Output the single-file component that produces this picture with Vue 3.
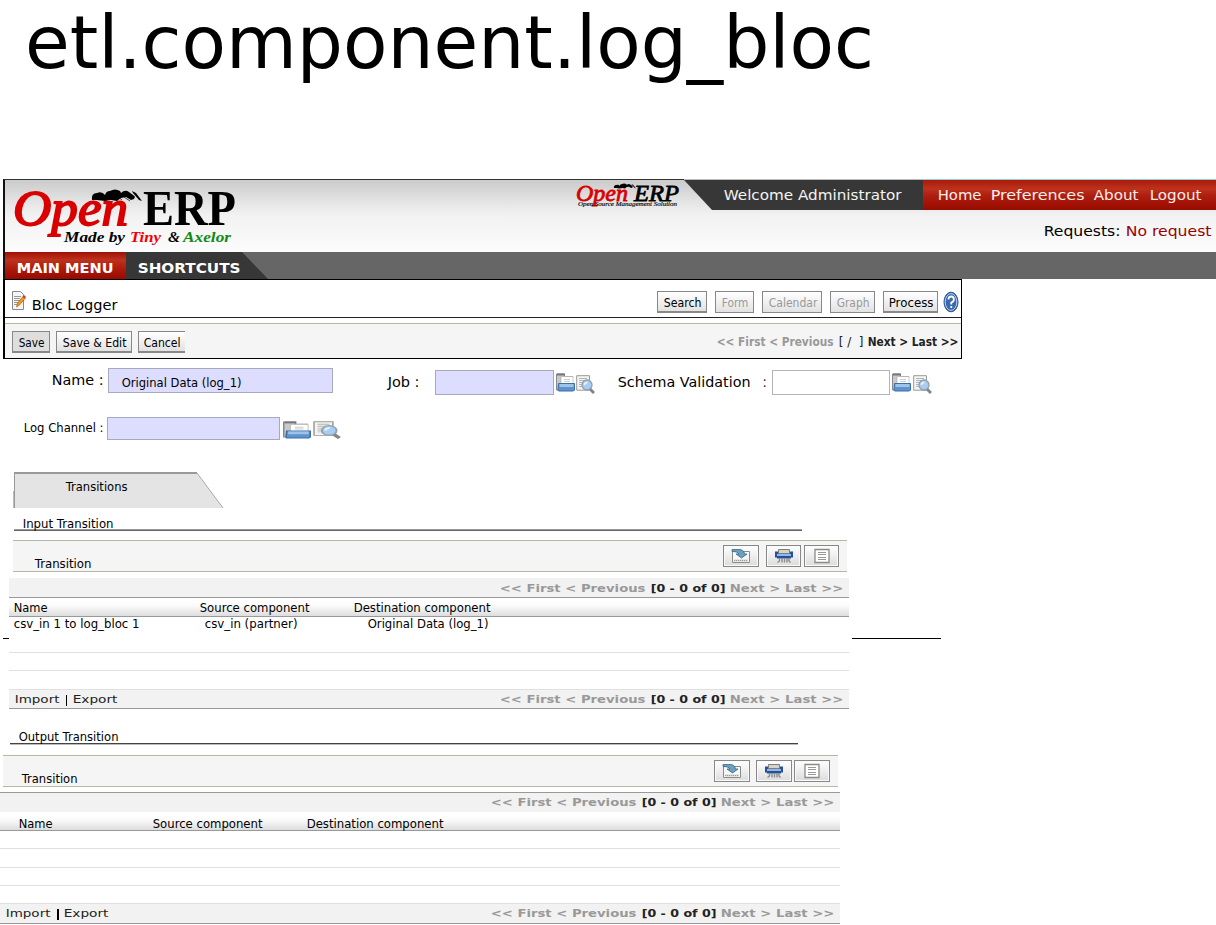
<script setup>
import { h } from 'vue'

// A line of text set to an exact measure
const Fit = (p) =>
  h('svg', { class: 'fit', width: p.w, height: 16 }, [
    h('text', { x: 0.7, y: 12, textLength: p.w - 1.2, lengthAdjust: 'spacingAndGlyphs', 'font-size': p.s || 12 }, p.t),
  ])
Fit.props = ['t', 'w', 's']

const Pager = () =>
  h('div', { class: 'pager' }, [
    h(Fit, { t: '<< First < Previous', w: 147, s: 10.6 }),
    h('b', { class: 'count' }, [h(Fit, { t: '[0 - 0 of 0]', w: 76, s: 10.6 })]),
    h(Fit, { t: 'Next > Last >>', w: 115, s: 10.6 }),
  ])

const Folder = (p) =>
  h('svg', { width: p.w, height: 19, viewBox: '0 0 19 19', preserveAspectRatio: 'none' }, [
    h('path', { d: 'M.5 17V1h8v2.500h8v13z', fill: '#c9c9c9', stroke: '#888' }),
    h('path', { d: 'M1 .500h8v2H1z', fill: '#777' }),
    h('path', { d: 'M5 3.500h12v8H5z', fill: '#fff', stroke: '#aaa', 'stroke-width': 0.6 }),
    h('path', { d: 'M8 6.5h6M8 8.500h6', stroke: '#ccc' }),
    h('path', { d: 'M2.500 10.500h16v6.500l-1 1h-15l-.5-1z', fill: '#5d94d0', stroke: '#3c6ea9' }),
    h('path', { d: 'M3.500 11h14v3h-14z', fill: '#a0c2e6' }),
  ])
Folder.props = ['w']

const Lens = (p) =>
  h('svg', { width: p.w, height: 19, viewBox: '0 0 19 19', preserveAspectRatio: 'none' }, [
    h('path', { d: 'M.7.7h12.8v14.500H.7z', fill: '#f4f4f2', stroke: '#999994' }),
    h('path', { d: 'M3 3.5h8M3 5.5h6M3 7.5h4M3 9.5h3M3 11.5h3', stroke: '#b4b4b4' }),
    h('path', { d: 'M14 14l4 4', stroke: '#858585', 'stroke-width': 3 }),
    h('circle', { cx: 11, cy: 10, r: 5, fill: '#a9cdf1', stroke: '#8f9faf', 'stroke-width': 1.3 }),
    h('path', { d: 'M8.500 10q0-2.500 3-2.500', fill: 'none', stroke: '#e6f3ff', 'stroke-width': 1.6 }),
  ])
Lens.props = ['w']

const Tools = () =>
  h('div', { class: 'tools' }, [
    h('span', { class: 'tool' }, [
      h('svg', { width: 20, height: 16 }, [
        h('path', { d: 'M1.500 3.500h17v11h-17z', fill: '#f8f8f6', stroke: '#8b8b88' }),
        h('path', { d: 'M3 11.500h14v2H3z', fill: '#d4d4d2' }),
        h('path', { d: 'M3 12.500h14', stroke: '#999', 'stroke-dasharray': '1 1' }),
        h('path', { d: 'M1 1.500h7q5 0 5.500 4.500h2.500l-5.500 4L5 6h3Q7 3.500 1 3.500z', fill: '#6f9fbd', stroke: '#346a8c', 'stroke-width': 0.8 }),
      ]),
    ]),
    h('span', { class: 'tool' }, [
      h('svg', { width: 20, height: 16 }, [
        h('path', { d: 'M1 3.500h18v6h-2v1H3v-1H1z', fill: '#25509b' }),
        h('path', { d: 'M3 6h14v2H3z', fill: '#91b9e5' }),
        h('path', { d: 'M4.500 1.500h11v4h-11z', fill: '#d4d4cc', stroke: '#80807a' }),
        h('path', { d: 'M5.500 10.500v2.500l-2 1.500M8 10.500v4M10.500 10.500v4M13 10.500v4M15 10.500v2.500l1.500 1.500', fill: 'none', stroke: '#8a8a88', 'stroke-width': 1.4 }),
      ]),
    ]),
    h('span', { class: 'tool' }, [
      h('svg', { width: 18, height: 16 }, [
        h('path', { d: 'M2 1.500h14v13H2z', fill: '#fff', stroke: '#8b8b84', 'stroke-width': 1.3 }),
        h('path', { d: 'M5 4.500h8M5 6.500h8M5 9.500h8M5 11.500h8', stroke: '#999' }),
      ]),
    ]),
  ])

const ant = 'M92 200q-1-7 5-7 5-2 8 2 1-4 5-4 5-3 10 0l1 2q4-4 8-1l4 3q3 1 1 4l-3 1-5-3-5 1-4 3-6-1-6 1-8-1zM132 191l4 2 6 8-3-1-6-7z'
</script>

<template>
  <div class="page">
    <div class="title"><svg class="fit" width="860" height="90"><text x="25" y="68" textLength="849" lengthAdjust="spacingAndGlyphs" font-size="73.300">etl.component.log_bloc</text></svg></div>

    <header class="head">
      <svg class="logo" width="565" height="72" viewBox="8 180 565 72">
        <g class="serif">
          <text x="13" y="225" font-size="50" font-style="italic" textLength="115" lengthAdjust="spacingAndGlyphs" fill="#d80000" stroke="#d80000" stroke-width="1.800">Open</text>
          <text x="143" y="225" font-size="51" font-weight="bold" textLength="93" lengthAdjust="spacingAndGlyphs">ERP</text>
          <g font-size="15.500" font-style="italic" font-weight="bold">
            <text x="64" y="242" textLength="61" lengthAdjust="spacingAndGlyphs">Made by</text>
            <text x="130" y="242" textLength="31" lengthAdjust="spacingAndGlyphs" fill="#f00000">Tiny</text>
            <text x="168" y="242" textLength="12" lengthAdjust="spacingAndGlyphs">&amp;</text>
            <text x="183" y="242" textLength="48" lengthAdjust="spacingAndGlyphs" fill="#108a10">Axelor</text>
          </g>
        </g>
        <path :d="ant" />
        <path d="M113 199l4-3 5 4M124 197l6 4" fill="none" stroke="#000" stroke-width=".7" />
      </svg>
      <svg class="small-logo" width="111" height="30" viewBox="573 180 111 30">
        <g class="serif" font-style="italic">
          <text x="576" y="201" font-size="24" textLength="52" lengthAdjust="spacingAndGlyphs" fill="#d80000" stroke="#d80000" stroke-width=".8">Open</text>
          <text x="634" y="201" font-size="24" textLength="45" lengthAdjust="spacingAndGlyphs" stroke="#000" stroke-width=".8">ERP</text>
          <text x="578" y="206" font-size="6.500" textLength="99" lengthAdjust="spacingAndGlyphs" stroke="#000" stroke-width=".15">Open Source Management Solution</text>
        </g>
        <path :d="ant" transform="translate(573.500 100) scale(.44)" />
      </svg>
      <div class="account">
        <div class="strip">
          <div class="welcome"><Fit t="Welcome Administrator" w="179" s="14.500" /></div>
          <nav class="links">
            <Fit t="Home" w="45" s="14.500" /><Fit t="Preferences" w="95" s="14.500" /><Fit t="About" w="46" s="14.500" /><Fit t="Logout" w="53" s="14.500" />
          </nav>
        </div>
        <div class="requests"><Fit t="Requests:" w="78" s="14.300" /><Fit class="none" t="No request" w="87" s="14.300" /></div>
      </div>
    </header>

    <div class="menu">
      <div class="main-menu"><Fit t="MAIN MENU" w="98" s="14.300" /></div>
      <div class="shortcuts"><Fit t="SHORTCUTS" w="104" s="14.300" /></div>
    </div>

    <section class="box">
      <div class="heading">
        <svg class="doc" width="14" height="20">
          <path d="M.5.5h8l3 3v15H.5z" fill="#f5f5f3" stroke="#888" />
          <path d="M2 5.500h7M2 7.500h6M2 9.500h6M2 11.500h5M2 13.500h5" stroke="#999" />
          <path d="M4.500 16l1-4 6-7 2 2-6 7z" fill="#f39a18" stroke="#a5520c" stroke-width=".6" />
          <path d="M10.500 6l1.500-2 2 2-1.500 1.500z" fill="#d33" />
        </svg>
        <Fit class="name" t="Bloc Logger" w="87" s="14" />
        <div class="views">
          <span class="btn search"><Fit t="Search" w="39" s="12.500" /></span>
          <span class="btn form off"><Fit t="Form" w="28" s="12.500" /></span>
          <span class="btn calendar off"><Fit t="Calendar" w="50" s="12.500" /></span>
          <span class="btn graph off"><Fit t="Graph" w="34" s="12.500" /></span>
          <span class="btn process"><Fit t="Process" w="46" s="12.500" /></span>
          <svg width="17" height="22"><ellipse cx="8" cy="11" rx="7" ry="9.800" fill="#3a68ad" stroke="#24549b" /><ellipse cx="8" cy="11" rx="5.800" ry="8.400" fill="none" stroke="#dce8f7" stroke-width=".8" /><path d="M5.500 8.500q0-3 2.700-3t2.700 3q0 2-2.600 3v2M8.300 15v2" fill="none" stroke="#fff" stroke-width="1.800" /></svg>
        </div>
      </div>
      <div class="actions">
        <span class="btn save"><Fit t="Save" w="27" s="12.500" /></span>
        <span class="btn edit"><Fit t="Save &amp; Edit" w="65" s="12.500" /></span>
        <span class="btn cancel"><Fit t="Cancel" w="38" s="12.500" /></span>
        <div class="record">
          <Fit class="past" t="&lt;&lt; First &lt; Previous" w="118" s="12" /><Fit class="slash" t="[ /  ]" w="26" s="12" /><Fit t="Next &gt; Last &gt;&gt;" w="92" s="12" />
        </div>
      </div>
    </section>

    <section class="fields">
      <div class="row first">
        <Fit class="up" t="Name :" w="53" s="14.300" />
        <div class="input tall"><Fit t="Original Data (log_1)" w="121" s="12" /></div>
        <Fit t="Job :" w="33" s="14.300" />
        <div class="input low"></div><Folder w="19" class="ico" /><Lens w="19" class="ico2" />
        <Fit t="Schema Validation" w="134" s="14.300" /><Fit t=":" w="5" s="14.300" />
        <div class="input low plain"></div><Folder w="19" class="ico" /><Lens w="19" class="ico2" />
      </div>
      <div class="row second">
        <Fit t="Log Channel :" w="81" s="12" />
        <div class="input"></div><Folder w="28" class="wide" /><Lens w="28" class="wide" />
      </div>
    </section>

    <div class="tab">
      <svg width="211" height="36"><path d="M1 1h183l26 35H1z" fill="#e4e4e4" /><path d="M1.500 36V1" stroke="#999" /><path d="M1 1h183" stroke="#999" stroke-width="2" /><path d="M184 1l26 35" stroke="#aaa" /><path d="M.5 19v17" stroke="#bbb" /></svg>
      <Fit class="label" t="Transitions" w="63" s="12" />
    </div>

    <section class="block in">
      <div class="legend"><Fit t="Input Transition" w="92" /></div>
      <div class="panel"><Fit class="label" t="Transition" w="58" /><Tools /></div>
      <div class="list">
        <div class="bar top"><Pager /></div>
        <div class="cols"><Fit t="Name" w="35" /><Fit t="Source component" w="111" /><Fit t="Destination component" w="138" /></div>
        <div class="line data"><Fit t="csv_in 1 to log_bloc 1" w="127" /><Fit t="csv_in (partner)" w="94" /><Fit t="Original Data (log_1)" w="122" /></div>
        <div class="line"></div>
        <div class="line last"></div>
        <div class="bar foot"><Fit t="Import" w="46" s="10.500" /><i class="sep"></i><Fit t="Export" w="46" s="10.500" /><Pager /></div>
      </div>
      <div class="rule left"></div>
      <div class="rule right"></div>
    </section>

    <section class="block out">
      <div class="legend"><Fit t="Output Transition" w="101" /></div>
      <div class="panel"><Fit class="label" t="Transition" w="57" /><Tools /></div>
      <div class="list">
        <div class="bar top"><Pager /></div>
        <div class="cols"><Fit t="Name" w="35" /><Fit t="Source component" w="111" /><Fit t="Destination component" w="138" /></div>
        <div class="line"></div>
        <div class="line taller"></div>
        <div class="line"></div>
        <div class="line"></div>
        <div class="bar foot"><Fit t="Import" w="46" s="10.500" /><i class="sep"></i><Fit t="Export" w="46" s="10.500" /><Pager /></div>
      </div>
    </section>
  </div>
</template>

<style>
body { background: #fff; }
.fit { display: block; flex: none; overflow: visible; }
.fit text { fill: currentColor; font-family: "DejaVu Sans", sans-serif; white-space: pre; }
.pager { display: grid; grid-template-columns: 151px 79px 115px; color: #999; font-weight: bold; }
.pager .count { color: #222; }
.tool { box-sizing: border-box; height: 22px; display: flex; align-items: center; justify-content: center; border: 1px solid #888; box-shadow: inset 0 0 0 1px #fafafa; background: linear-gradient(#fff, #dcdcdc); }
</style>

<style scoped>
.page { width: 1216px; height: 925px; overflow: hidden; color: #000; font-family: "DejaVu Sans", sans-serif; }
.page * { box-sizing: border-box; }
.title { height: 179px; }
.serif { font-family: "Liberation Serif", serif; }

.head { display: flex; height: 73px; margin-left: 3px; border-left: 2px solid #111; border-top: 1px solid #333; background: linear-gradient(#cbcbcb, #e4e4e4 30%, #f2f2f2 50%, #fcfcfc); }
.logo { margin-left: 3px; flex: none; }
.small-logo { flex: none; }
.account { width: 532px; margin-top: -1px; border-top: 1px solid #bbb; }
.strip { display: flex; height: 30px; }
.welcome { width: 239px; padding: 8px 0 0 39px; background: #373737; color: #f4f4f4; clip-path: polygon(0 0, 100% 0, 100% 100%, 28px 100%); }
.links { width: 293px; padding: 8px 0 0 14px; display: grid; grid-template-columns: 53px 103px 56px auto; color: #fbeeee; background: linear-gradient(#a81a0b, #bd321d 30%, #b02010 50%, #980900); box-shadow: 0 -1px 0 #8fd0d2; }
.requests { display: grid; grid-template-columns: 82px auto; padding: 14px 0 0 359px; }
.none { color: #900; }

.menu { display: flex; height: 27px; margin-left: 3px; border-left: 2px solid #111; background: #666; color: #fff; font-weight: bold; }
.main-menu { width: 121px; padding: 9px 0 0 11px; background: linear-gradient(#a01005, #bd321d 30%, #ae1c0d 60%, #980900); }
.shortcuts { width: 142px; padding: 9px 0 0 11px; background: #373737; clip-path: polygon(0 0, 116px 0, 100% 100%, 0 100%); }

.box { width: 959px; height: 80px; margin-left: 3px; border: 1px solid #000; border-left-width: 2px; }
.heading { display: flex; height: 38px; padding-left: 7px; border-bottom: 1px solid #222; }
.doc { margin-top: 11px; flex: none; }
.name { margin: 18px 0 0 5px; }
.views { display: grid; grid-template-columns: 58px 47px 68px 53px 60px 17px; margin: 11px 0 0 539px; }
.btn { display: block; height: 22px; padding: 3px 0 0 5px; border: 1px solid #888; border-bottom-width: 2px; background: linear-gradient(#fff, #e2e2e2); }
.search { width: 50px; }
.form { width: 39px; }
.calendar { width: 60px; }
.graph { width: 45px; }
.process { width: 55px; padding-left: 4px; }
.off { color: #999; border-bottom-width: 1px; }
.actions { display: grid; grid-template-columns: 44px 82px 578px auto; margin-top: 5px; height: 35px; padding: 7px 0 0 7px; background: #f5f5f5; border-top: 1px solid #b7b7a8; }
.save { width: 38px; background: #dedede; }
.edit { width: 76px; }
.cancel { width: 47px; padding-left: 4px; border-right: 0; }
.record { display: grid; grid-template-columns: 122px 29px auto; padding-top: 3px; font-weight: bold; color: #222; }
.past { color: #999; }
.slash { font-weight: normal; }

.fields { height: 113px; }
.row { display: grid; align-items: start; }
.first { grid-template-columns: 57px 279px 48px 121px 20px 41px 145px 10px 120px 21px auto; padding: 9px 0 0 51px; height: 58px; }
.first > .fit { margin-top: 7px; }
.first > .fit.up { margin-top: 5px; }
.input { height: 25px; border: 1px solid #a9a9bd; background: #ddf; }
.tall { width: 225px; padding: 6px 0 0 12px; }
.low { width: 119px; margin-top: 2px; }
.plain { width: 118px; background: #fff; border-color: #b4b4b4; }
.ico { margin-top: 5px; }
.ico2 { margin-top: 7px; }
.second { grid-template-columns: 84px 176px 30px auto; padding-left: 23px; }
.second > .fit { margin-top: 3px; }
.second .input { width: 173px; height: 23px; }
.wide { margin-top: 4px; height: 18px; }

.tab { display: grid; height: 36px; margin-left: 13px; }
.tab > * { grid-area: 1 / 1; }
.tab .label { margin: 7px 0 0 52px; }

.block { display: grid; align-content: start; }
.in { grid-template-columns: 9px 843px 1fr; margin-top: 8px; height: 210px; }
.in > .legend, .in > .panel, .in > .list { grid-column: 2; }
.legend { height: 14px; border-bottom: 1px solid #999; box-shadow: 0 1px 0 #666; }
.in .legend { width: 788px; margin-left: 5px; padding-left: 8px; }
.panel { display: flex; justify-content: space-between; height: 32px; margin-top: 10px; background: #f5f5f5; border-top: 1px solid #b7b7a8; border-bottom: 1px solid #b7b7a8; }
.in .panel { width: 834px; margin-left: 4px; padding: 4px 8px 0 21px; }
.panel .label { margin-top: 11px; }
.panel :deep(.tools) { display: grid; width: 116px; }
.in :deep(.tools) { grid-template-columns: 36px 35px 35px; column-gap: 0; }
.in :deep(.tool:nth-child(n + 2)) { margin-left: 0; }
.in .panel :deep(.tools) { grid-template-columns: 36px 7px 35px 3px 35px; }
.out .panel :deep(.tools) { grid-template-columns: 36px 6px 36px 2px 36px; }
.panel :deep(.tool:nth-child(1)) { grid-column: 1; }
.panel :deep(.tool:nth-child(2)) { grid-column: 3; }
.panel :deep(.tool:nth-child(3)) { grid-column: 5; }
.list { width: 840px; }
.in .list { margin-top: 6px; grid-row: 3; }
.bar { height: 19px; background: #f2f2f2; }
.top { display: flex; justify-content: flex-end; padding: 2px 5px 0 0; }
.cols { display: grid; height: 20px; background: linear-gradient(#fff 15%, #fafafa 45%, #ddd); border-bottom: 1px solid #999; }
.in .cols { grid-template-columns: 186px 154px auto; padding: 2px 0 0 4px; border-top: 1px solid #999; }
.line { height: 18px; border-bottom: 1px solid #e0e0e0; }
.data { display: grid; grid-template-columns: 191px 163px auto; height: 36px; padding-left: 4px; }
.data > .fit { margin-top: -1px; }
.in .last { height: 19px; }
.foot { display: grid; grid-template-columns: 52px 6px 427px auto; height: 19px; padding: 1px 0 0 5px; border-bottom: 1px solid #999; color: #222; }
.sep { width: 1px; height: 11px; margin-top: 4px; background: #000; }
.rule { grid-row: 3; height: 1px; margin-top: 66px; background: #000; }
.left { grid-column: 1; margin-left: 3px; }
.right { grid-column: 3; width: 89px; }

.out { margin-top: 3px; }
.out .legend { width: 788px; height: 15px; margin: 0 0 0 10px; padding: 0 0 0 8px; border-bottom-color: #444; box-shadow: 0 1px 0 #bbb; }
.out .panel { width: 835px; margin: 11px 0 0 3px; padding: 4px 8px 0 18px; }
.out .list { margin-top: 5px; }
.out .top { height: 20px; border-top: 1px solid #999; padding: 1px 5px 0 0; }
.out .cols { height: 19px; grid-template-columns: 134px 154px auto; padding: 4px 0 0 18px; }
.out .taller { height: 19px; }
.out .foot { height: 20px; padding: 1px 0 0 5px; grid-template-columns: 52px 6px 427px auto; }
.out .sep { width: 2px; }
</style>
